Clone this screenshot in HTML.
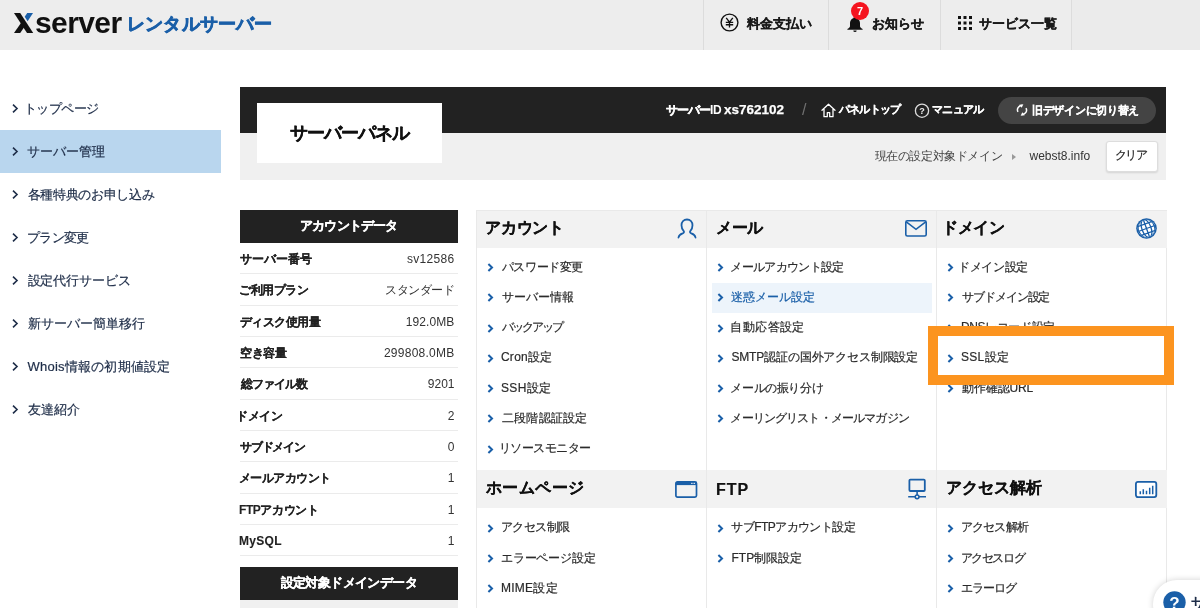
<!DOCTYPE html>
<html lang="ja">
<head>
<meta charset="utf-8">
<title>Xserver レンタルサーバー | サーバーパネル</title>
<style>
*{margin:0;padding:0;box-sizing:border-box}
html,body{width:1200px;height:608px;overflow:hidden;background:#fff}
body{font-family:"Liberation Sans",sans-serif;font-size:12px;color:#333;position:relative;will-change:transform}
ul{list-style:none}
a{color:inherit;text-decoration:none}
.abs{position:absolute}

/* ---------- global header ---------- */
#hd{position:absolute;left:0;top:0;width:1200px;height:50px;background:#ededed}
#hd .tail{position:absolute;left:1072px;top:0;width:128px;height:50px;background:#ebebeb}
#hd .sep{position:absolute;top:0;width:1px;height:50px;background:#dcdcdc}
#logo{position:absolute;left:14px;top:0;height:50px}
#logo svg{position:absolute;left:0;top:13px}
#logo .sv{position:absolute;left:21px;top:7.6px;font-size:30px;font-weight:bold;line-height:1;letter-spacing:-.6px;color:#111;white-space:nowrap}
#logo .jp{position:absolute;left:113px;top:15px;font-size:18px;font-weight:bold;line-height:1;color:#1a5fa8;white-space:nowrap;letter-spacing:.2px;-webkit-text-stroke:.7px #1a5fa8}
.hnav{position:absolute;top:0;height:50px;font-size:13px;font-weight:bold;color:#1a1a1a;line-height:47px;white-space:nowrap;-webkit-text-stroke:.25px}
.badge{left:851px;top:1.5px;width:18px;height:18px;border-radius:9px;background:#f5141f;color:#fff;font-size:11px;font-weight:bold;line-height:18px;text-align:center}

/* ---------- side menu ---------- */
#side{position:absolute;left:0;top:87px;width:221px}
#side li{position:relative;height:43px;line-height:43px;padding-left:27px;font-size:13px;color:#1e2d48;white-space:nowrap;-webkit-text-stroke:.2px}
#side li.on{background:#b9d6ee}
#side li svg{position:absolute;left:11px;top:16px}
#side li span{display:inline-block}

/* ---------- panel head ---------- */
#ph{position:absolute;left:240px;top:87px;width:926px;height:93px;background:#f0f0f0}
#ph .bar{position:absolute;left:0;top:0;width:926px;height:46px;background:#222}
#ph h1{position:absolute;left:17px;top:16px;width:185px;height:60px;background:#fff;font-size:18px;font-weight:bold;color:#111;text-align:center;line-height:60px;white-space:nowrap;letter-spacing:-.9px;-webkit-text-stroke:.3px #111}
#ph .sid{color:#fff;height:46px;line-height:46px;white-space:nowrap;font-size:13.5px}
#ph .sid .l{font-size:12px;font-weight:bold;letter-spacing:-1px;-webkit-text-stroke:.3px}
#ph .sid .i{font-size:12px;font-weight:bold;letter-spacing:-.3px;margin-right:2.5px}
#ph .sid b{-webkit-text-stroke:.25px}
#ph .pl{color:#fff;font-weight:bold;font-size:11px;height:46px;line-height:44px;white-space:nowrap;letter-spacing:-.8px;-webkit-text-stroke:.2px}
#ph .pill{left:758px;top:10px;width:158px;height:27px;border-radius:14px;background:#444;color:#fff;font-weight:bold;font-size:11px;line-height:26px;white-space:nowrap}
#ph .pill svg{position:absolute;left:17px;top:6.3px}
#ph .pill span{position:absolute;left:34px;top:0;letter-spacing:-.3px;-webkit-text-stroke:.2px}
#ph .cur{left:634.5px;top:46px;height:47px;line-height:46px;color:#444;font-size:12px;white-space:nowrap;letter-spacing:-.4px}
#ph .tri{left:771.5px;top:66.5px;border-left:4px solid #999;border-top:3px solid transparent;border-bottom:3px solid transparent}
#ph .dom{left:789.5px;top:46px;height:47px;line-height:46px;color:#333;font-size:12px}
#ph .clr{left:865.5px;top:54px;width:52px;height:30.5px;border:1px solid #ddd;border-radius:3px;background:#fff;color:#222;line-height:27px;text-align:center;font-size:11.5px;letter-spacing:-1.4px;text-indent:-1.4px;box-shadow:0 1px 2px rgba(0,0,0,.12);-webkit-text-stroke:.15px}

/* ---------- account data ---------- */
#acc{position:absolute;left:240px;top:210px;width:217.5px}
.dh{height:33px;line-height:31px;background:#222;color:#fff;font-weight:bold;font-size:13px;text-align:center;white-space:nowrap;-webkit-text-stroke:.25px}
#acc dl{display:flex;justify-content:space-between;height:31.33px;line-height:33px;border-bottom:1px solid #ebebeb;padding-right:3px;white-space:nowrap}
#acc dt{font-weight:bold;color:#222;-webkit-text-stroke:.1px}
#acc dd{color:#333}

/* ---------- menu panels ---------- */
#menu{position:absolute;left:476px;top:209.5px;width:690.5px;height:420px;border:1px solid #e9e9e9;border-bottom:0}
.col{position:absolute;top:0;height:420px;border-left:1px solid #e9e9e9}
.box{height:259.8px}
.box h2{position:relative;height:37px;line-height:34px;background:#f2f2f2;font-size:16px;font-weight:bold;color:#111;padding-left:9px;white-space:nowrap;-webkit-text-stroke:.2px #111}
.box h2 span{display:inline-block;position:relative}
.box+.box h2{height:38px;line-height:36px}
.box+.box h2 .ic{margin-top:.5px}
.box .ic{position:absolute}
.box ul{padding-top:5px}
.box li{position:relative;height:30.3px;line-height:29px;padding-left:19.5px;margin:0 5px;color:#2b2b2b;white-space:nowrap;-webkit-text-stroke:.2px}
.box li svg{position:absolute;left:4.5px;top:10.5px}
.box li span{display:inline-block}
.box li.hl{background:#edf4fb;color:#1a5fa8}

#frame{position:absolute;left:928px;top:326px;width:246px;height:58.5px;border:10px solid #fc941f}
#help{position:absolute;left:1152.5px;top:580px;width:200px;height:48px;border-radius:24px;background:#fff;box-shadow:0 0 6px rgba(0,0,0,.18)}
#help svg{position:absolute;left:10.2px;top:10.5px}
#help span{position:absolute;left:38px;top:13px;font-size:15px;font-weight:bold;color:#1e2d48;line-height:20px;white-space:nowrap}
</style>
</head>
<body>

<!-- ================= header ================= -->
<div id="hd">
  <div class="tail"></div>
  <div id="logo">
    <svg width="20" height="21" viewBox="0 0 20 21"><path d="M0 0h6.200L19.200 20H13z" fill="#111"/><path d="M0 20L7.300 9.400l3 4.600L6.200 20z" fill="#111"/><path d="M13.200 0h5.800l-5.400 8.300-2.900-4.500z" fill="#1a5fa8"/></svg>
    <span class="sv">server</span>
    <span class="jp">レンタルサーバー</span>
  </div>
  <svg class="abs" style="left:720px;top:13.200px" width="19" height="19" viewBox="0 0 19 19"><circle cx="9.500" cy="9.500" r="8.400" fill="none" stroke="#111" stroke-width="1.400"/><path d="M6.200 4.800l3.300 4.400 3.300-4.400M5.800 9.400h7.400M5.800 11.700h7.400M9.500 9.200v5.200" fill="none" stroke="#111" stroke-width="1.350"/></svg>
  <a class="hnav" style="left:747px">料金支払い</a>
  <svg class="abs" style="left:846px;top:15px" width="18" height="18" viewBox="0 0 18 18"><path d="M9 1.200c-.8 0-1.300.5-1.300 1.200v.5C5.300 3.600 4 5.600 4 8v3.200c0 .8-.6 1.700-2.600 2.900v.7h15.200v-.7C14.600 12.900 14 12 14 11.200V8c0-2.400-1.300-4.400-3.700-5.100v-.5C10.300 1.700 9.800 1.200 9 1.200z" fill="#111"/><path d="M7.300 15.600a1.700 1.500 0 0 0 3.400 0z" fill="#111"/></svg>
  <span class="abs badge">7</span>
  <a class="hnav" style="left:872px">お知らせ</a>
  <svg class="abs" style="left:958px;top:16px" width="14" height="14" viewBox="0 0 14 14" fill="#111"><rect x="0" y="0" width="3" height="3"/><rect x="5.500" y="0" width="3" height="3"/><rect x="11" y="0" width="3" height="3"/><rect x="0" y="5.500" width="3" height="3"/><rect x="5.500" y="5.500" width="3" height="3"/><rect x="11" y="5.500" width="3" height="3"/><rect x="0" y="11" width="3" height="3"/><rect x="5.500" y="11" width="3" height="3"/><rect x="11" y="11" width="3" height="3"/></svg>
  <a class="hnav" style="left:979px">サービス一覧</a>
  <i class="sep" style="left:703px"></i>
  <i class="sep" style="left:828px"></i>
  <i class="sep" style="left:940px"></i>
  <i class="sep" style="left:1071px"></i>
</div>

<!-- ================= side ================= -->
<ul id="side">
  <li><svg width="8" height="11" viewBox="0 0 8 11"><path d="M2 1.700L6 5.500 2 9.300" fill="none" stroke="#1e2d48" stroke-width="1.600"/></svg><span style="letter-spacing:-0.6px;margin-left:-3px">トップページ</span></li>
  <li class="on"><svg width="8" height="11" viewBox="0 0 8 11"><path d="M2 1.700L6 5.500 2 9.300" fill="none" stroke="#1e2d48" stroke-width="1.600"/></svg><span style="margin-left:-0.4px">サーバー管理</span></li>
  <li><svg width="8" height="11" viewBox="0 0 8 11"><path d="M2 1.700L6 5.500 2 9.300" fill="none" stroke="#1e2d48" stroke-width="1.600"/></svg><span style="letter-spacing:-0.3px;margin-left:0.6px">各種特典のお申し込み</span></li>
  <li><svg width="8" height="11" viewBox="0 0 8 11"><path d="M2 1.700L6 5.500 2 9.300" fill="none" stroke="#1e2d48" stroke-width="1.600"/></svg><span style="letter-spacing:-0.55px;margin-left:-0.4px">プラン変更</span></li>
  <li><svg width="8" height="11" viewBox="0 0 8 11"><path d="M2 1.700L6 5.500 2 9.300" fill="none" stroke="#1e2d48" stroke-width="1.600"/></svg><span style="letter-spacing:-0.12px;margin-left:0.6px">設定代行サービス</span></li>
  <li><svg width="8" height="11" viewBox="0 0 8 11"><path d="M2 1.700L6 5.500 2 9.300" fill="none" stroke="#1e2d48" stroke-width="1.600"/></svg><span style="letter-spacing:-0.01px;margin-left:0.6px">新サーバー簡単移行</span></li>
  <li><svg width="8" height="11" viewBox="0 0 8 11"><path d="M2 1.700L6 5.500 2 9.300" fill="none" stroke="#1e2d48" stroke-width="1.600"/></svg><span style="letter-spacing:0.2px;margin-left:0.6px">Whois情報の初期値設定</span></li>
  <li><svg width="8" height="11" viewBox="0 0 8 11"><path d="M2 1.700L6 5.500 2 9.300" fill="none" stroke="#1e2d48" stroke-width="1.600"/></svg><span style="letter-spacing:0.25px;margin-left:0.6px">友達紹介</span></li>
</ul>

<!-- ================= panel head ================= -->
<div id="ph">
  <div class="bar"></div>
  <h1>サーバーパネル</h1>
  <div class="abs sid" style="left:426px;top:0"><span class="l">サーバー</span><span class="i">ID</span><b>xs762102</b></div>
  <span class="abs" style="left:562px;top:13.500px;font-size:16px;color:#707070;line-height:18px">/</span>
  <svg class="abs" style="left:580.500px;top:16px" width="15" height="15" viewBox="0 0 15 15"><path d="M1 7.300L7.500 1.300 14 7.300M3 6v7.700h3.300V9.600h2.400v4.100H12V6" fill="none" stroke="#fff" stroke-width="1.300" stroke-linejoin="round" stroke-linecap="round"/></svg>
  <a class="abs pl" style="left:599px;top:0">パネルトップ</a>
  <svg class="abs" style="left:674px;top:16px" width="16" height="16" viewBox="0 0 16 16"><circle cx="8" cy="7.700" r="6.600" fill="none" stroke="#ddd" stroke-width="1.300"/><text x="8" y="11" font-size="9" font-weight="bold" fill="#eee" text-anchor="middle" font-family="Liberation Sans, sans-serif">?</text></svg>
  <a class="abs pl" style="left:692.300px;top:0">マニュアル</a>
  <a class="abs pill"><svg width="14" height="14" viewBox="0 0 14 14"><g transform="rotate(-42 7 7)"><path d="M11.300 8.200A4.400 4.400 0 0 1 4 10.400M2.700 5.800A4.400 4.400 0 0 1 10 3.600" fill="none" stroke="#fff" stroke-width="1.500"/><path d="M8.500 1.200l3.300 2.500-3.600 1.500zM5.500 12.800L2.200 10.300l3.600-1.500z" fill="#fff"/></g></svg><span>旧デザインに切り替え</span></a>
  <div class="abs cur">現在の設定対象ドメイン</div>
  <i class="abs tri"></i>
  <div class="abs dom">webst8.info</div>
  <a class="abs clr">クリア</a>
</div>

<!-- ================= account data ================= -->
<div id="acc">
  <div class="dh"><span style="letter-spacing:-.85px">アカウントデータ</span></div>
  <dl><dt style="letter-spacing:-0.04px">サーバー番号</dt><dd style="letter-spacing:0.32px">sv12586</dd></dl>
  <dl><dt style="letter-spacing:-0.44px;margin-left:-1px">ご利用プラン</dt><dd style="letter-spacing:-0.44px">スタンダード</dd></dl>
  <dl><dt style="letter-spacing:-0.56px">ディスク使用量</dt><dd style="letter-spacing:0.12px">192.0MB</dd></dl>
  <dl><dt style="letter-spacing:-0.3px">空き容量</dt><dd style="letter-spacing:0.25px">299808.0MB</dd></dl>
  <dl><dt style="letter-spacing:-1px;margin-left:1px">総ファイル数</dt><dd>9201</dd></dl>
  <dl><dt style="letter-spacing:-0.33px;margin-left:-4px">ドメイン</dt><dd>2</dd></dl>
  <dl><dt style="letter-spacing:-1.2px">サブドメイン</dt><dd>0</dd></dl>
  <dl><dt style="letter-spacing:-0.57px;margin-left:-1px">メールアカウント</dt><dd>1</dd></dl>
  <dl><dt style="letter-spacing:-0.43px;margin-left:-1px">FTPアカウント</dt><dd>1</dd></dl>
  <dl><dt style="letter-spacing:0.31px;margin-left:-1px">MySQL</dt><dd>1</dd></dl>
  <div class="dh" style="margin-top:10.500px"><span style="letter-spacing:-.6px">設定対象ドメインデータ</span></div>
  <div style="height:20px;background:#f0f0f0"></div>
</div>

<!-- ================= menu ================= -->
<div id="menu">
  <div class="col" style="left:-1px;width:230.500px">
    <div class="box">
      <h2><span style="letter-spacing:-0.25px;margin-left:-1px">アカウント</span><svg class="ic" style="left:200px;top:7.5px" width="20" height="21" viewBox="0 0 20 21"><path d="M1.500 19.500c.3-2.300 1.800-3.300 4.200-4.100 1.300-.5 1.600-1.400 1-2.300C5.300 11.700 4.500 9.800 4.500 7.300 4.500 3.800 6.700 1.500 10 1.500s5.500 2.300 5.500 5.800c0 2.500-.8 4.400-2.200 5.800-.6.900-.3 1.800 1 2.300 2.400.8 3.900 1.800 4.200 4.100" fill="none" stroke="#1a5fa8" stroke-width="1.800" stroke-linecap="round"/></svg></h2>
      <ul>
        <li><svg width="7" height="9" viewBox="0 0 7 9"><path d="M1.400 1.100L5 4.500 1.400 7.900" fill="none" stroke="#1a5fa8" stroke-width="2"/></svg><span style="letter-spacing:-0.4px;margin-left:0.4px">パスワード変更</span></li>
        <li><svg width="7" height="9" viewBox="0 0 7 9"><path d="M1.400 1.100L5 4.500 1.400 7.900" fill="none" stroke="#1a5fa8" stroke-width="2"/></svg><span style="margin-left:0.4px">サーバー情報</span></li>
        <li><svg width="7" height="9" viewBox="0 0 7 9"><path d="M1.400 1.100L5 4.500 1.400 7.900" fill="none" stroke="#1a5fa8" stroke-width="2"/></svg><span style="letter-spacing:-1.88px;margin-left:0.4px">バックアップ</span></li>
        <li><svg width="7" height="9" viewBox="0 0 7 9"><path d="M1.400 1.100L5 4.500 1.400 7.900" fill="none" stroke="#1a5fa8" stroke-width="2"/></svg><span style="letter-spacing:0.28px;margin-left:-0.6px">Cron設定</span></li>
        <li><svg width="7" height="9" viewBox="0 0 7 9"><path d="M1.400 1.100L5 4.500 1.400 7.900" fill="none" stroke="#1a5fa8" stroke-width="2"/></svg><span style="letter-spacing:0.39px;margin-left:-0.6px">SSH設定</span></li>
        <li><svg width="7" height="9" viewBox="0 0 7 9"><path d="M1.400 1.100L5 4.500 1.400 7.900" fill="none" stroke="#1a5fa8" stroke-width="2"/></svg><span style="letter-spacing:0.26px;margin-left:0.4px">二段階認証設定</span></li>
        <li><svg width="7" height="9" viewBox="0 0 7 9"><path d="M1.400 1.100L5 4.500 1.400 7.900" fill="none" stroke="#1a5fa8" stroke-width="2"/></svg><span style="letter-spacing:-0.55px;margin-left:-2.6px">リソースモニター</span></li>
      </ul>
    </div>
    <div class="box">
      <h2><span style="letter-spacing:0.4px">ホームページ</span><svg class="ic" style="left:197.200px;top:9.500px" width="24" height="19" viewBox="0 0 24 19"><rect x="1.900" y="1.900" width="20.600" height="15.200" rx="1.600" fill="none" stroke="#1a5fa8" stroke-width="1.700"/><rect x="1.900" y="1.900" width="20.600" height="3.200" fill="#1a5fa8"/><rect x="17.300" y="2.800" width="1.200" height="1.200" fill="#fff"/><rect x="19.600" y="2.800" width="1.200" height="1.200" fill="#fff"/></svg></h2>
      <ul>
        <li><svg width="7" height="9" viewBox="0 0 7 9"><path d="M1.400 1.100L5 4.500 1.400 7.900" fill="none" stroke="#1a5fa8" stroke-width="2"/></svg><span style="letter-spacing:-0.6px;margin-left:-0.6px">アクセス制限</span></li>
        <li><svg width="7" height="9" viewBox="0 0 7 9"><path d="M1.400 1.100L5 4.500 1.400 7.900" fill="none" stroke="#1a5fa8" stroke-width="2"/></svg><span style="letter-spacing:-0.15px;margin-left:-0.6px">エラーページ設定</span></li>
        <li><svg width="7" height="9" viewBox="0 0 7 9"><path d="M1.400 1.100L5 4.500 1.400 7.900" fill="none" stroke="#1a5fa8" stroke-width="2"/></svg><span style="letter-spacing:0.28px;margin-left:-0.6px">MIME設定</span></li>
      </ul>
    </div>
  </div>
  <div class="col" style="left:229px;width:230.500px">
    <div class="box">
      <h2><span style="letter-spacing:-0.5px">メール</span><svg class="ic" style="left:197px;top:8.500px" width="24" height="19" viewBox="0 0 24 19"><rect x="1.800" y="1.800" width="20.400" height="15.200" rx="1.600" fill="none" stroke="#1a5fa8" stroke-width="1.600"/><path d="M2.300 2.800L12 10.300 21.700 2.800" fill="none" stroke="#1a5fa8" stroke-width="1.600"/></svg></h2>
      <ul>
        <li><svg width="7" height="9" viewBox="0 0 7 9"><path d="M1.400 1.100L5 4.500 1.400 7.900" fill="none" stroke="#1a5fa8" stroke-width="2"/></svg><span style="letter-spacing:-0.69px;margin-left:-1.1px">メールアカウント設定</span></li>
        <li class="hl"><svg width="7" height="9" viewBox="0 0 7 9"><path d="M1.400 1.100L5 4.500 1.400 7.900" fill="none" stroke="#1a5fa8" stroke-width="2"/></svg><span style="letter-spacing:-0.09px;margin-left:-0.1px">迷惑メール設定</span></li>
        <li><svg width="7" height="9" viewBox="0 0 7 9"><path d="M1.400 1.100L5 4.500 1.400 7.900" fill="none" stroke="#1a5fa8" stroke-width="2"/></svg><span style="letter-spacing:0.38px;margin-left:-1.1px">自動応答設定</span></li>
        <li><svg width="7" height="9" viewBox="0 0 7 9"><path d="M1.400 1.100L5 4.500 1.400 7.900" fill="none" stroke="#1a5fa8" stroke-width="2"/></svg><span style="letter-spacing:-0.15px;margin-left:-0.1px">SMTP認証の国外アクセス制限設定</span></li>
        <li><svg width="7" height="9" viewBox="0 0 7 9"><path d="M1.400 1.100L5 4.500 1.400 7.900" fill="none" stroke="#1a5fa8" stroke-width="2"/></svg><span style="letter-spacing:-0.4px;margin-left:-1.1px">メールの振り分け</span></li>
        <li><svg width="7" height="9" viewBox="0 0 7 9"><path d="M1.400 1.100L5 4.500 1.400 7.900" fill="none" stroke="#1a5fa8" stroke-width="2"/></svg><span style="letter-spacing:-0.85px;margin-left:-1.1px">メーリングリスト・メールマガジン</span></li>
      </ul>
    </div>
    <div class="box">
      <h2><span style="letter-spacing:1px;top:2px">FTP</span><svg class="ic" style="left:200px;top:6.800px" width="20" height="22" viewBox="0 0 20 22"><rect x="2.400" y="1.600" width="15.400" height="11.400" rx="1" fill="none" stroke="#1a5fa8" stroke-width="1.800"/><path d="M10.100 13v4M1.200 18.800h17.800" fill="none" stroke="#1a5fa8" stroke-width="1.600"/><circle cx="10.100" cy="18.800" r="1.900" fill="#f2f2f2" stroke="#1a5fa8" stroke-width="1.500"/></svg></h2>
      <ul>
        <li><svg width="7" height="9" viewBox="0 0 7 9"><path d="M1.400 1.100L5 4.500 1.400 7.900" fill="none" stroke="#1a5fa8" stroke-width="2"/></svg><span style="letter-spacing:-0.58px;margin-left:-0.1px">サブFTPアカウント設定</span></li>
        <li><svg width="7" height="9" viewBox="0 0 7 9"><path d="M1.400 1.100L5 4.500 1.400 7.900" fill="none" stroke="#1a5fa8" stroke-width="2"/></svg><span style="letter-spacing:0.07px;margin-left:-0.1px">FTP制限設定</span></li>
      </ul>
    </div>
  </div>
  <div class="col" style="left:459px;width:230.500px">
    <div class="box">
      <h2><span style="letter-spacing:-0.33px;margin-left:-4px">ドメイン</span><svg class="ic" style="left:198px;top:6.900px" width="23" height="23" viewBox="0 0 23 23"><circle cx="11.500" cy="11.500" r="10.300" fill="#1a5fa8"/><g transform="rotate(-20 11.500 11.500)"><clipPath id="gc"><circle cx="11.500" cy="11.500" r="8.800"/></clipPath><circle cx="11.500" cy="11.500" r="8.800" fill="#fff"/><g clip-path="url(#gc)" fill="none" stroke="#1a5fa8" stroke-width="1.300"><path d="M11.500 2v19M2 11.500h19M3 6.800h17M3 16.200h17"/><ellipse cx="11.500" cy="11.500" rx="4.600" ry="9.400"/><ellipse cx="11.500" cy="11.500" rx="8.300" ry="9.400"/></g></g></svg></h2>
      <ul>
        <li><svg width="7" height="9" viewBox="0 0 7 9"><path d="M1.400 1.100L5 4.500 1.400 7.900" fill="none" stroke="#1a5fa8" stroke-width="2"/></svg><span style="letter-spacing:-0.32px;margin-left:-3.6px">ドメイン設定</span></li>
        <li><svg width="7" height="9" viewBox="0 0 7 9"><path d="M1.400 1.100L5 4.500 1.400 7.900" fill="none" stroke="#1a5fa8" stroke-width="2"/></svg><span style="letter-spacing:-1.06px;margin-left:0.4px">サブドメイン設定</span></li>
        <li><svg width="7" height="9" viewBox="0 0 7 9"><path d="M1.400 1.100L5 4.500 1.400 7.900" fill="none" stroke="#1a5fa8" stroke-width="2"/></svg><span style="letter-spacing:-0.38px;margin-left:-0.6px">DNSレコード設定</span></li>
        <li><svg width="7" height="9" viewBox="0 0 7 9"><path d="M1.400 1.100L5 4.500 1.400 7.900" fill="none" stroke="#1a5fa8" stroke-width="2"/></svg><span style="letter-spacing:0.35px;margin-left:-0.6px">SSL設定</span></li>
        <li><svg width="7" height="9" viewBox="0 0 7 9"><path d="M1.400 1.100L5 4.500 1.400 7.900" fill="none" stroke="#1a5fa8" stroke-width="2"/></svg><span style="letter-spacing:-0.1px;margin-left:0.4px">動作確認URL</span></li>
      </ul>
    </div>
    <div class="box">
      <h2><span>アクセス解析</span><svg class="ic" style="left:197.200px;top:9.500px" width="24" height="19" viewBox="0 0 24 19"><rect x="1.900" y="1.900" width="20.400" height="15.200" rx="2" fill="#fff" stroke="#1a5fa8" stroke-width="1.800"/><path d="M6.300 14.200v-3M9.300 14.200v-5M12.500 14.200v-3.500M15.700 14.200v-6.500M18.700 14.200V5.800" stroke="#1a5fa8" stroke-width="1.500" fill="none"/></svg></h2>
      <ul>
        <li><svg width="7" height="9" viewBox="0 0 7 9"><path d="M1.400 1.100L5 4.500 1.400 7.900" fill="none" stroke="#1a5fa8" stroke-width="2"/></svg><span style="letter-spacing:-0.84px;margin-left:-0.6px">アクセス解析</span></li>
        <li><svg width="7" height="9" viewBox="0 0 7 9"><path d="M1.400 1.100L5 4.500 1.400 7.900" fill="none" stroke="#1a5fa8" stroke-width="2"/></svg><span style="letter-spacing:-1.48px;margin-left:-0.6px">アクセスログ</span></li>
        <li><svg width="7" height="9" viewBox="0 0 7 9"><path d="M1.400 1.100L5 4.500 1.400 7.900" fill="none" stroke="#1a5fa8" stroke-width="2"/></svg><span style="letter-spacing:-0.91px;margin-left:-0.6px">エラーログ</span></li>
      </ul>
    </div>
  </div>
</div>

<!-- highlight frame -->
<div id="frame"></div>

<!-- support widget -->
<div id="help"><svg width="23" height="23" viewBox="0 0 23 23"><circle cx="11.500" cy="11.500" r="11.200" fill="#1a5fa8"/><text x="11.500" y="17.600" font-size="17" font-weight="bold" fill="#fff" text-anchor="middle" font-family="Liberation Sans, sans-serif">?</text></svg><span>サポート</span></div>

</body>
</html>
